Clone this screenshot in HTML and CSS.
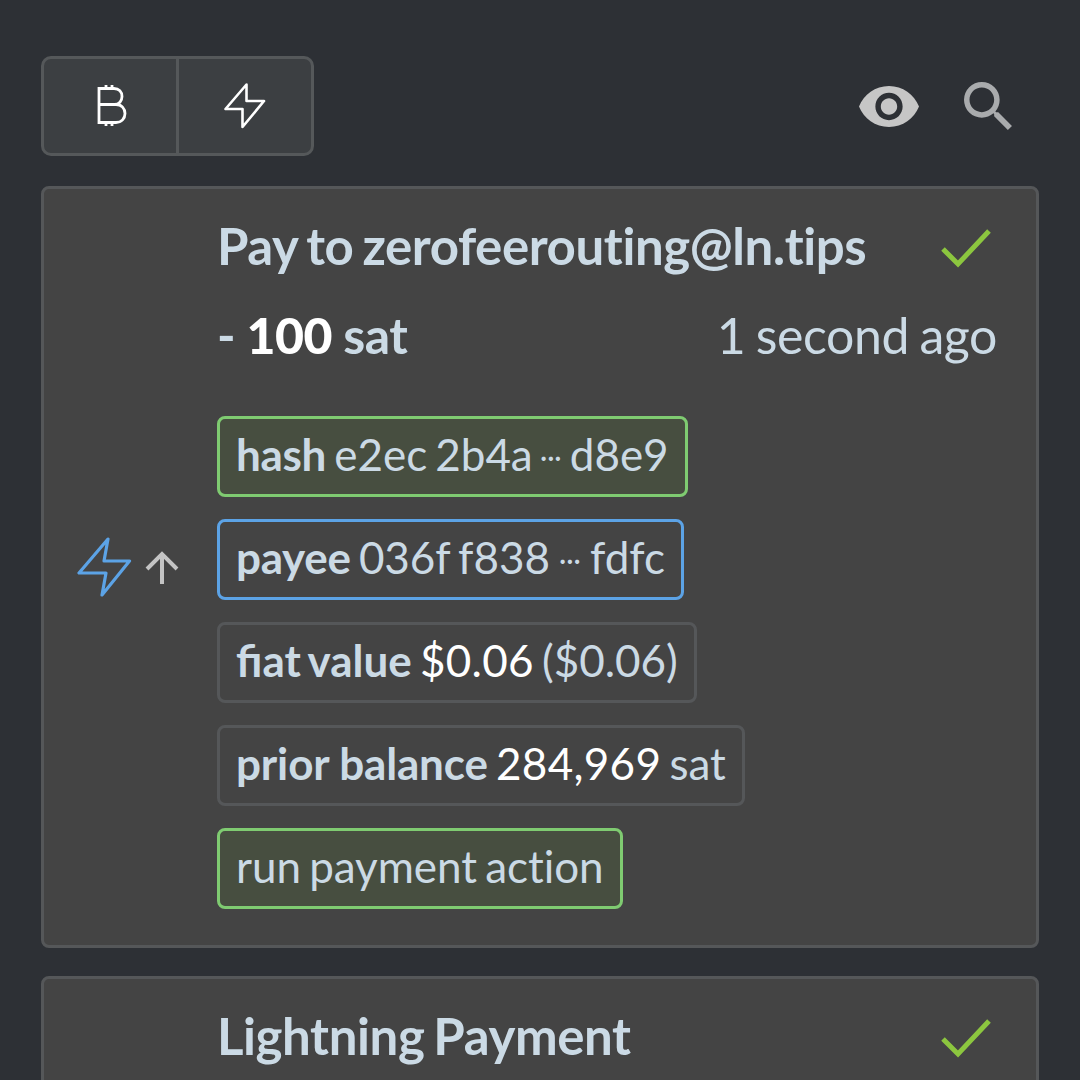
FILE: index.html
```html
<!DOCTYPE html>
<html lang="en">
<head>
<meta charset="utf-8">
<title>Payments</title>
<link rel="stylesheet" href="styles.css">
</head>
<body>
<header class="toolbar">
  <div class="toggle">
    <button class="toggle-btn">
      <svg width="40" height="42" viewBox="0 0 40 42" fill="none" stroke="#fff" stroke-width="2.800"><path d="M9 3.500H24C29 3.500 32 7 32 11.500C32 16 29 19.500 24.500 19.500H9ZM9 19.500H26C31.500 19.500 35 23.500 35 28.500C35 33.500 31.500 37.500 26 37.500H9ZM16 0V3.500M22 0V3.500M16 37.500V41M22 37.500V41"/></svg>
    </button>
    <button class="toggle-btn">
      <svg width="42" height="46" viewBox="0 0 42 46" fill="none" stroke="#fff" stroke-width="2.600" stroke-linejoin="round"><path d="M22.500 1.500 1.500 26H18.500V44L40 18H22.500Z"/></svg>
    </button>
  </div>
  <div class="tools">
    <svg class="eye" width="60" height="41" viewBox="1 4.500 22 15"><path fill="#c6c6c6" d="M12 4.500C7 4.500 2.730 7.610 1 12c1.730 4.390 6 7.500 11 7.500s9.270-3.110 11-7.500c-1.730-4.390-6-7.500-11-7.500zM12 17c-2.760 0-5-2.240-5-5s2.240-5 5-5 5 2.240 5 5-2.240 5-5 5zm0-8c-1.660 0-3 1.340-3 3s1.340 3 3 3 3-1.340 3-3-1.340-3-3-3z"/></svg>
    <svg class="search" width="48" height="48" viewBox="3 3 17.500 17.500"><path fill="#a9abad" d="M15.500 14h-.79l-.28-.27A6.471 6.471 0 0 0 16 9.500 6.500 6.500 0 1 0 9.500 16c1.610 0 3.090-.59 4.230-1.570l.27.28v.79l5 4.990L20.490 19l-4.990-5zm-6 0C7.010 14 5 11.990 5 9.500S7.010 5 9.500 5 14 7.010 14 9.500 11.990 14 9.500 14z"/></svg>
  </div>
</header>

<article class="card">
  <div class="side">
    <svg width="56" height="60" viewBox="0 0 56 60" fill="none" stroke="#5ca3e6" stroke-width="3.200" stroke-linejoin="round"><path d="M31 2 2 36H29L25 58 52.500 24H27Z"/></svg>
    <svg class="arrow" width="34" height="34" viewBox="0 0 34 34" fill="none" stroke="#c4c4c4" stroke-width="4"><path d="M17 33V3M2 18 17 3 32 18"/></svg>
  </div>
  <div class="body">
    <div class="row title-row">
      <h2 class="title">Pay to zerofeerouting@ln.tips</h2>
      <svg class="check" width="50" height="40" viewBox="0 0 50 40" fill="none" stroke="#8cc63f" stroke-width="5"><path d="M2 20 17 35 48 2"/></svg>
    </div>
    <div class="row amount-row">
      <div class="amount">- <b>100</b> sat</div>
      <div class="time">1 second ago</div>
    </div>
    <div class="chips">
      <div class="chip chip-green"><b>hash</b> e2ec 2b4a <span class="dots dots-tight">···</span> d8e9</div>
      <div class="chip chip-blue"><b>payee</b> 036f f838 <span class="dots">···</span> fdfc</div>
      <div class="chip"><b class="label-fiat">fiat value</b> <span class="white">$0.06</span> ($0.06)</div>
      <div class="chip"><b class="label-wide">prior balance</b> <span class="white">284,969</span> sat</div>
      <div class="chip chip-green">run payment action</div>
    </div>
  </div>
</article>

<article class="card card-next">
  <div class="side"></div>
  <div class="body">
    <div class="row title-row">
      <h2 class="title">Lightning Payment</h2>
      <svg class="check" width="50" height="40" viewBox="0 0 50 40" fill="none" stroke="#8cc63f" stroke-width="5"><path d="M2 20 17 35 48 2"/></svg>
    </div>
  </div>
</article>
</body>
</html>
```
FILE: styles.css
```css
* { box-sizing: border-box; }
html, body { height: 1080px; overflow: hidden; }
body {
  margin: 0;
  padding: 56px 41px 0;
  background: #2d3035;
  font-family: Lato, "Open Sans", sans-serif;
  color: #cbdae5;
}
.toolbar {
  display: flex;
  justify-content: space-between;
  align-items: center;
  height: 100px;
  margin-bottom: 30px;
}
.toggle {
  display: flex;
  width: 273px;
  height: 100px;
  border: 3px solid #55585a;
  border-radius: 10px;
  background: #3c3f42;
  overflow: hidden;
}
.toggle-btn {
  flex: 1;
  display: flex;
  align-items: center;
  justify-content: center;
  padding: 0;
  background: none;
  border: 0;
}
.toggle-btn + .toggle-btn { border-left: 3px solid #55585a; }
.tools {
  display: flex;
  align-items: center;
  gap: 45px;
  padding-right: 27px;
}
.card {
  display: flex;
  height: 762px;
  background: #444444;
  border: 3px solid #555759;
  border-radius: 8px;
  margin-bottom: 28px;
}
.card-next { height: 300px; }
.side {
  width: 173px;
  flex: none;
  display: flex;
  align-items: center;
  padding-left: 33px;
  gap: 12px;
}
.arrow { margin-top: 2px; }
.body {
  flex: 1;
  padding: 26px 39px 0 0;
  min-width: 0;
}
.row {
  display: flex;
  justify-content: space-between;
  align-items: center;
}
.title-row { height: 62px; padding-right: 6px; }
.title-row .check { margin-top: 6px; }
.title {
  margin: 0;
  font-size: 51px;
  font-weight: 700;
  letter-spacing: -0.42px;
  word-spacing: -3px;
  line-height: 62px;
  color: #cbdae5;
}
.amount-row { height: 62px; margin-top: 27px; }
.amount { font-size: 50px; font-weight: 700; letter-spacing: -0.6px; }
.amount b { color: #fff; }
.time { font-size: 50px; letter-spacing: -0.4px; word-spacing: -2px; }
.chips {
  display: flex;
  flex-direction: column;
  align-items: flex-start;
  gap: 22px;
  margin-top: 50px;
}
.chip {
  height: 81px;
  line-height: 70px;
  padding: 0 16px;
  border: 3px solid #555759;
  border-radius: 8px;
  font-size: 44px;
  letter-spacing: -0.05px;
  word-spacing: -3px;
  white-space: nowrap;
  color: #cbdae5;
}
.chip b { letter-spacing: -0.3px; word-spacing: 0; }
.chip b.label-fiat { letter-spacing: 0; word-spacing: -3px; }
.chip b.label-wide { letter-spacing: -0.15px; }
.chip-green { border-color: #7fcb71; background: #474e40; }
.chip-blue { border-color: #5ca3e6; }
.white { color: #fff; letter-spacing: 0.3px; }
.dots { font-size: 28px; vertical-align: 4px; padding: 0 1px; }
.dots-tight { padding: 0; margin-left: -1px; }
```
